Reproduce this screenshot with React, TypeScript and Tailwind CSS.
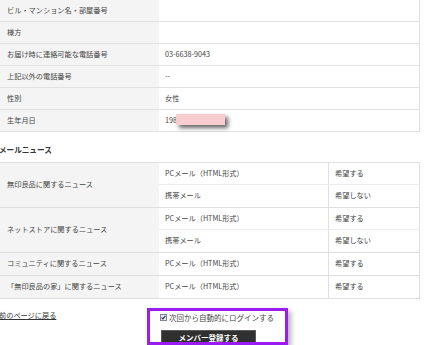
import React from 'react';

const profileRows = [
  { label: 'ビル・マンション名・部屋番号', value: '' },
  { label: '様方', value: '' },
  { label: 'お届け時に連絡可能な電話番号', value: '03-6638-9043' },
  { label: '上記以外の電話番号', value: '--' },
  { label: '性別', value: '女性' },
  { label: '生年月日', value: '198' },
];

const newsGroups = [
  {
    label: '無印良品に関するニュース',
    items: [
      { type: 'PCメール（HTML形式）', wish: '希望する' },
      { type: '携帯メール', wish: '希望しない' },
    ],
  },
  {
    label: 'ネットストアに関するニュース',
    items: [
      { type: 'PCメール（HTML形式）', wish: '希望する' },
      { type: '携帯メール', wish: '希望しない' },
    ],
  },
  {
    label: 'コミュニティに関するニュース',
    items: [{ type: 'PCメール（HTML形式）', wish: '希望する' }],
  },
  {
    label: '「無印良品の家」に関するニュース',
    items: [{ type: 'PCメール（HTML形式）', wish: '希望する' }],
  },
];

export default function App() {
  return (
    <div className="relative w-[429px] h-[345px] overflow-hidden bg-white text-[#444] font-['Noto_Sans_CJK_JP','Noto_Sans',sans-serif]">
      {/* profile table */}
      <div className="w-[420px] border-r border-[#e0e0e0]">
        {profileRows.map((row) => (
          <div key={row.label} className="flex h-[22px] border-b border-[#e2e2e2]">
            <div className="w-[159px] bg-[#f4f4f4] pl-[7px] flex items-center text-[7.2px] leading-none">
              {row.label}
            </div>
            <div className="flex-1 pl-[6px] flex items-center text-[7.2px] leading-none">
              {row.value}
            </div>
          </div>
        ))}
      </div>

      {/* redacted birth date */}
      <div className="absolute left-[176px] top-[114px] w-[49px] h-[11px] bg-[#f7cdd0] shadow-[3px_3px_4px_rgba(0,0,0,0.6)]" />

      {/* mail news */}
      <h2 className="mt-[11px] h-[14px] leading-[14px] -ml-[1px] text-[7.6px] font-bold text-[#333]">メールニュース</h2>

      <div className="mt-[5px] w-[420px] border-t border-r border-[#e0e0e0]">
        {newsGroups.map((group) => (
          <div key={group.label} className="flex border-b border-[#dedede]">
            <div className="w-[159px] bg-[#f4f4f4] pl-[7px] flex items-center text-[7.2px] leading-none">
              {group.label}
            </div>
            <div className="flex-1 flex flex-col">
              {group.items.map((item, i) => (
                <div
                  key={i}
                  className={`flex h-[22px] text-[7.2px] leading-none ${
                    i < group.items.length - 1 ? 'border-b border-[#ececec]' : 'h-[21px]'
                  }`}
                >
                  <div className="w-[170px] pl-[6px] flex items-center border-r border-[#e0e0e0]">{item.type}</div>
                  <div className="flex-1 pl-[6px] flex items-center">{item.wish}</div>
                </div>
              ))}
            </div>
          </div>
        ))}
      </div>

      {/* footer actions */}
      <div className="flex items-start">
        <a href="#" className="mt-[11px] w-[148px] -ml-[1px] text-[7.2px] leading-[10px] text-[#333] underline">
          前のページに戻る
        </a>
        <div className="mt-[9px] w-[141px] h-[37px] border-[3px] border-[#9b1cf2] overflow-hidden shadow-[3px_3px_5px_rgba(0,0,0,0.3)]">
          <label className="mt-[2px] pl-[10px] h-[9px] flex items-center gap-[2px] text-[7.5px] leading-none text-[#444]">
            <svg width="7" height="7" viewBox="0 0 7 7" className="shrink-0">
              <rect x="0.5" y="0.5" width="6" height="6" fill="#e6e9f2" stroke="#7d8597" />
              <path d="M1.6 3.6 L2.9 4.9 L5.4 1.8" fill="none" stroke="#2b2f3a" strokeWidth="1.1" />
            </svg>
            次回から自動的にログインする
          </label>
          <div className="mt-[8px] ml-[11px] w-[95px] h-[16px] bg-[#303030] border border-[#5a5a5a] flex items-center justify-center text-white font-bold text-[7.5px] leading-none">
            メンバー登録する
          </div>
        </div>
      </div>
    </div>
  );
}
